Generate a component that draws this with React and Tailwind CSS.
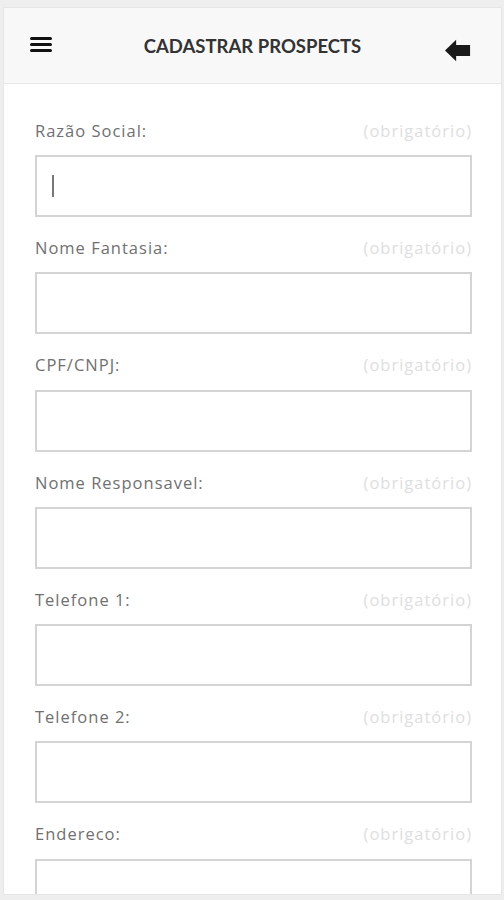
import React from 'react';

const fields = [
  'Razão Social:',
  'Nome Fantasia:',
  'CPF/CNPJ:',
  'Nome Responsavel:',
  'Telefone 1:',
  'Telefone 2:',
  'Endereco:',
];

function BackArrow() {
  return (
    <svg width="28" height="25" viewBox="0 0 28 25" className="block">
      <path d="M0 12.5 L12 1 L12 6.5 L27 6.5 L27 18.5 L12 18.5 L12 24 Z" fill="#1a1a1a" />
    </svg>
  );
}

export default function App() {
  return (
    <div className="h-[900px] w-[504px] overflow-hidden bg-[#eeeeee] pl-[3px] pr-[2px] pt-[7px] pb-[5px]">
      <div className="flex h-full flex-col overflow-hidden border border-[#e6e6e6] bg-white">
        {/* Header */}
        <div className="flex h-[76px] shrink-0 items-center border-b border-[#e8e8e8] bg-[#f8f8f8] px-[26px]">
          <div className="flex w-[24px] flex-col gap-[3px] -translate-y-[1px]">
            <span className="block h-[3px] w-[22px] rounded-sm bg-[#111]" />
            <span className="block h-[3px] w-[22px] rounded-sm bg-[#111]" />
            <span className="block h-[3px] w-[22px] rounded-sm bg-[#111]" />
          </div>
          <h1
            className="flex-1 pl-[6px] text-center text-[18.5px] font-bold text-[#333] translate-y-[1px]"
            style={{ fontFamily: 'Lato, "Open Sans", sans-serif' }}
          >
            CADASTRAR PROSPECTS
          </h1>
          <div className="flex w-[30px] justify-end pr-[4px] translate-y-[5px]">
            <BackArrow />
          </div>
        </div>

        {/* Form */}
        <div
          className="flex flex-col pl-[31px] pr-[29px] pt-[35px]"
          style={{ fontFamily: '"Open Sans", "Noto Sans", sans-serif' }}
        >
          {fields.map((label, i) => (
            <div key={label} className="mb-[19.3px] flex flex-col">
              <div className="flex h-[24px] items-center justify-between">
                <span className="text-[16.5px] tracking-[1px] text-[#707070]">{label}</span>
                <span className="text-[16.5px] tracking-[1px] text-[#dedede]">(obrigatório)</span>
              </div>
              <div className="mt-[12px] flex h-[62px] items-center border-2 border-[#d4d4d4] bg-white pl-[15px]">
                {i === 0 && <span className="block h-[22px] w-[2px] bg-[#777]" />}
              </div>
            </div>
          ))}
        </div>
      </div>
    </div>
  );
}
